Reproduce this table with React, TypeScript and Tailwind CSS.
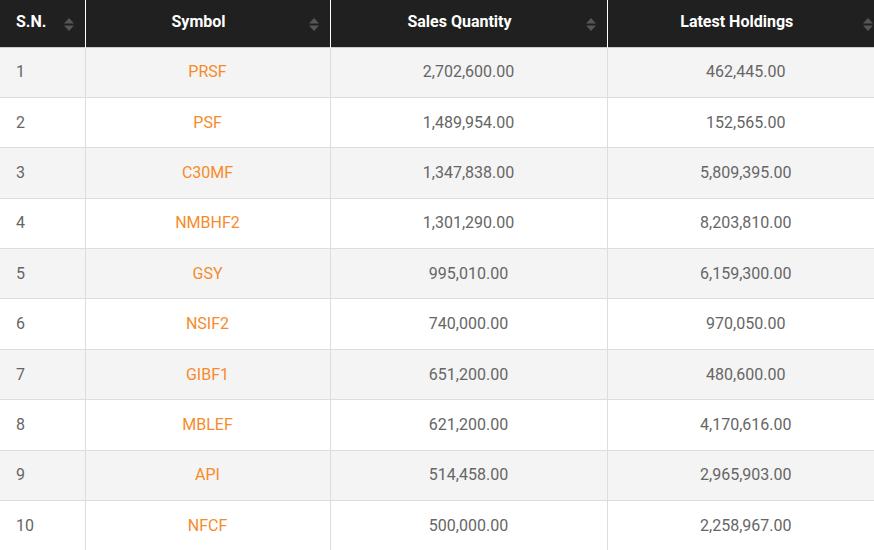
import React from "react";

const rows = [
  { sn: 1, symbol: "PRSF", sales: "2,702,600.00", holdings: "462,445.00" },
  { sn: 2, symbol: "PSF", sales: "1,489,954.00", holdings: "152,565.00" },
  { sn: 3, symbol: "C30MF", sales: "1,347,838.00", holdings: "5,809,395.00" },
  { sn: 4, symbol: "NMBHF2", sales: "1,301,290.00", holdings: "8,203,810.00" },
  { sn: 5, symbol: "GSY", sales: "995,010.00", holdings: "6,159,300.00" },
  { sn: 6, symbol: "NSIF2", sales: "740,000.00", holdings: "970,050.00" },
  { sn: 7, symbol: "GIBF1", sales: "651,200.00", holdings: "480,600.00" },
  { sn: 8, symbol: "MBLEF", sales: "621,200.00", holdings: "4,170,616.00" },
  { sn: 9, symbol: "API", sales: "514,458.00", holdings: "2,965,903.00" },
  { sn: 10, symbol: "NFCF", sales: "500,000.00", holdings: "2,258,967.00" },
];

function SortIcon() {
  return (
    <svg
      width="10"
      height="13"
      viewBox="0 0 10 13"
      className="absolute right-[11px] top-[18px]"
    >
      <path d="M5 0 L10 5.5 L0 5.5 Z" fill="#555555" />
      <path d="M0 7.5 L10 7.5 L5 13 Z" fill="#555555" />
    </svg>
  );
}

export default function App() {
  return (
    <div
      className="w-[874px] h-[550px] overflow-hidden bg-white"
      style={{ fontFamily: "Roboto, 'Liberation Sans', sans-serif" }}
    >
      <table className="w-[884px] table-fixed border-collapse text-[16px]">
        <colgroup>
          <col className="w-[85px]" />
          <col className="w-[245px]" />
          <col className="w-[277px]" />
          <col className="w-[277px]" />
        </colgroup>
        <thead>
          <tr className="bg-[#202020] text-white border-b border-[#cccccc]">
            <th className="relative h-[47px] pl-4 pr-6 pb-[3px] text-left font-bold border-r border-white">
              S.N.
              <SortIcon />
            </th>
            <th className="relative h-[47px] pl-2 pr-[26px] pb-[3px] text-center font-bold border-r border-white">
              Symbol
              <SortIcon />
            </th>
            <th className="relative h-[47px] pl-2 pr-[26px] pb-[3px] text-center font-bold border-r border-white">
              Sales Quantity
              <SortIcon />
            </th>
            <th className="relative h-[47px] pl-2 pr-[26px] pb-[3px] text-center font-bold">
              Latest Holdings
              <SortIcon />
            </th>
          </tr>
        </thead>
        <tbody className="text-[#666666]">
          {rows.map((r) => (
            <tr
              key={r.sn}
              className={`border-b border-[#dddddd] ${r.sn % 2 === 1 ? "bg-[#f4f4f4]" : "bg-white"}`}
            >
              <td className="h-[50.4px] pl-4 text-left border-r border-[#dddddd]">{r.sn}</td>
              <td className="h-[50.4px] text-center text-[#f68b2b] border-r border-[#dddddd]">{r.symbol}</td>
              <td className="h-[50.4px] text-center border-r border-[#dddddd]">{r.sales}</td>
              <td className="h-[50.4px] text-center">{r.holdings}</td>
            </tr>
          ))}
        </tbody>
      </table>
    </div>
  );
}
